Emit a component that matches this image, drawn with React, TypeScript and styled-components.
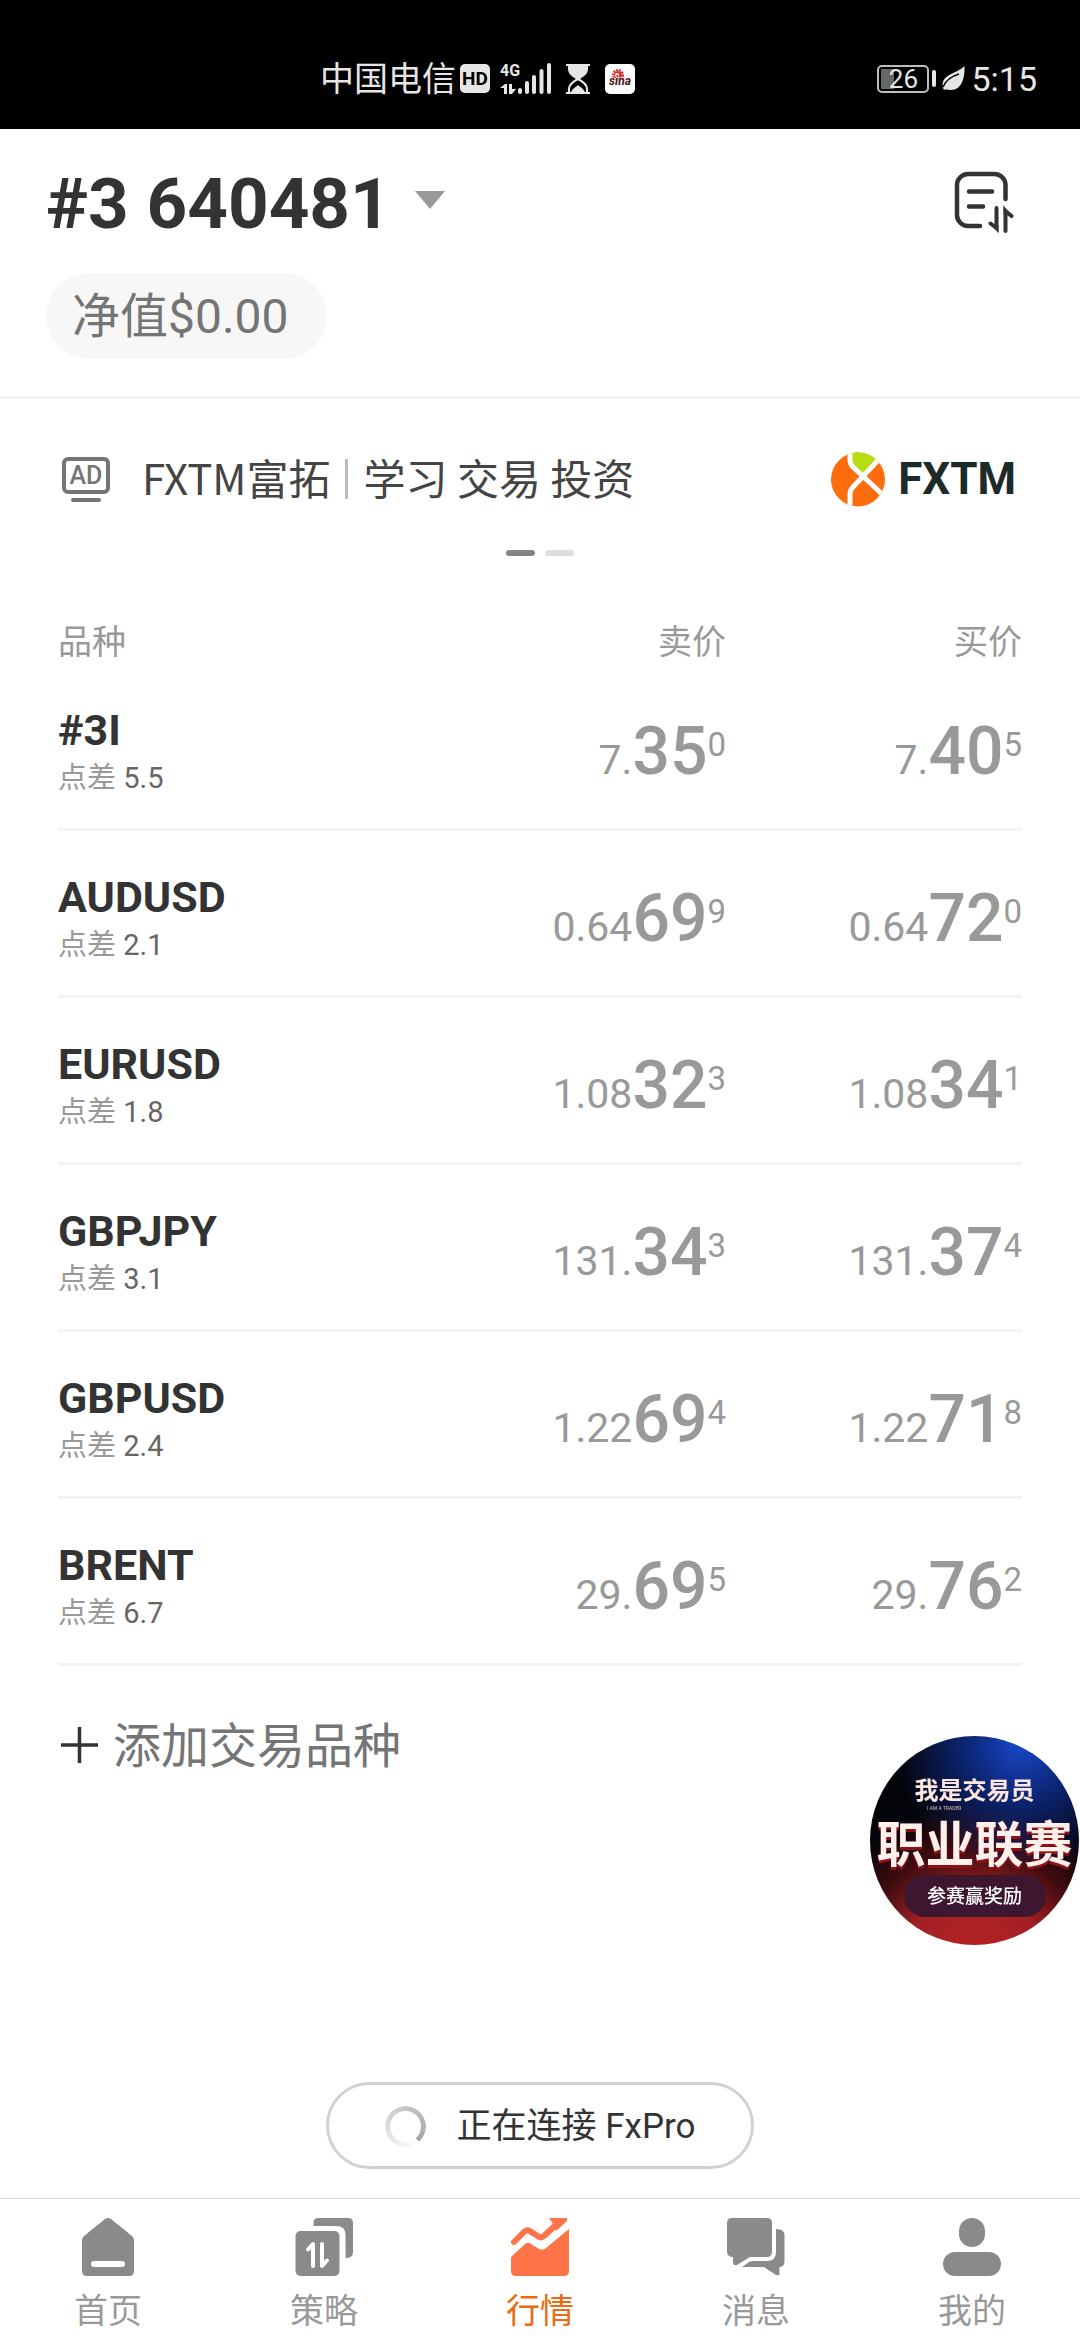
import React from "react";
import styled, { createGlobalStyle } from "styled-components";

const GlobalStyle = createGlobalStyle`
  *, *::before, *::after { box-sizing: border-box; }
  body {
    margin: 0;
    background: #fff;
    color: #333;
    font-family: Roboto, "Noto Sans CJK SC", sans-serif;
  }
  button {
    margin: 0;
    padding: 0;
    border: 0;
    background: none;
    color: inherit;
    font: inherit;
    cursor: pointer;
  }
  svg { display: block; flex: none; }
`;

const Page = styled.div`
  display: flex;
  flex-direction: column;
  min-height: 100vh;
`;

/* ---------- status bar ---------- */

const StatusBar = styled.div`
  display: flex;
  align-items: center;
  justify-content: space-between;
  height: 129px;
  padding: 28px 43px 0 320px;
  background: #000;
  color: #e6e6e6;
  line-height: 40px;
`;

const StatusGroup = styled.div<{ $gap: number }>`
  display: flex;
  align-items: center;
  gap: ${(p) => p.$gap}px;
`;

const Carrier = styled.span`
  font-size: 34px;
`;

const HdBadge = styled.span`
  width: 30px;
  height: 29px;
  border-radius: 5px;
  background: #e6e6e6;
  color: #000;
  font-size: 19px;
  font-weight: 700;
  line-height: 29px;
  text-align: center;
`;

const Signal = styled.div`
  display: flex;
  align-items: flex-end;
  height: 31px;
`;

const Network = styled.div`
  display: flex;
  flex-direction: column;
  justify-content: space-between;
  width: 18px;
  height: 31px;
  font-size: 16px;
  font-weight: 700;
  line-height: 16px;
`;

const SinaIcon = styled.span`
  width: 30px;
  height: 30px;
  border-radius: 5px;
  background: #fff;
`;

const Battery = styled.span`
  display: flex;
  align-items: center;
  gap: 3px;
  &::after {
    content: "";
    width: 4px;
    height: 17px;
    border-radius: 2px;
    background: #e6e6e6;
  }
`;

const BatteryBody = styled.span`
  width: 52px;
  height: 28px;
  border: 2px solid #bdbdbd;
  border-radius: 5px;
  background: linear-gradient(#666, #666) 2px 2px / 13px 20px no-repeat;
  font-size: 26px;
  line-height: 25px;
  text-align: center;
`;

const Clock = styled.span`
  font-size: 34px;
`;

/* ---------- account header ---------- */

const Header = styled.header`
  display: flex;
  align-items: flex-start;
  justify-content: space-between;
  padding: 33px 66px 37px 46px;
  border-bottom: 3px solid #f3f3f3;
`;

const Account = styled.div`
  display: flex;
  flex-direction: column;
  align-items: flex-start;
  gap: 27px;
`;

const AccountButton = styled.button`
  display: flex;
  align-items: center;
  gap: 24px;
  font-size: 71px;
  font-weight: 700;
  line-height: 84px;
`;

const Caret = styled.span`
  width: 0;
  height: 0;
  margin-bottom: 8px;
  border: 15px solid transparent;
  border-top: 18px solid #999;
  border-bottom: 0;
`;

const NetValue = styled.div`
  height: 86px;
  padding: 0 38px 0 26px;
  border-radius: 43px;
  background: #f7f7f7;
  color: #757575;
  font-size: 48px;
  line-height: 88px;
`;

const IconButton = styled.button`
  margin-top: 9px;
`;

/* ---------- advert ---------- */

const Advert = styled.a`
  display: flex;
  align-items: center;
  height: 120px;
  margin-top: 20px;
  padding: 0 64px 0 62px;
  color: #444;
  text-decoration: none;
`;

const AdMark = styled.span`
  display: flex;
  flex-direction: column;
  align-items: center;
  gap: 4px;
  &::after {
    content: "";
    width: 30px;
    height: 4px;
    border-radius: 2px;
    background: #757575;
  }
`;

const AdLabel = styled.span`
  width: 48px;
  height: 37px;
  border: 4px solid #757575;
  border-radius: 6px;
  color: #757575;
  font-size: 25px;
  font-weight: 500;
  line-height: 30px;
  text-align: center;
`;

const AdText = styled.span`
  display: flex;
  align-items: center;
  flex: 1;
  margin-left: 32px;
  padding-bottom: 4px;
  font-family: "Noto Sans CJK SC", sans-serif;
  font-size: 42px;
  line-height: 56px;
`;

const AdRule = styled.span`
  width: 3px;
  height: 40px;
  margin: 4px 15px 0;
  background: #bbb;
`;

const Brand = styled.span`
  display: flex;
  align-items: center;
  gap: 12px;
  color: #1d2a2a;
  font-size: 44px;
  font-weight: 700;
  line-height: 56px;
`;

const Dots = styled.div`
  display: flex;
  justify-content: center;
  gap: 10px;
  margin-top: 11px;
`;

const Dot = styled.span<{ $active?: boolean }>`
  width: 29px;
  height: 6px;
  border-radius: 3px;
  background: ${(p) => (p.$active ? "#858585" : "#dedede")};
`;

/* ---------- quotes ---------- */

const Quotes = styled.main`
  padding: 64px 58px 0;
`;

const Table = styled.table`
  width: 100%;
  border-spacing: 0;
  table-layout: fixed;
`;

const HeadCell = styled.th<{ $right?: boolean }>`
  width: ${(p) => (p.$right ? "296px" : "auto")};
  height: 44px;
  padding: 0;
  color: #999;
  font-size: 34px;
  font-weight: 400;
  line-height: 44px;
  text-align: ${(p) => (p.$right ? "right" : "left")};
`;

const Cell = styled.td<{ $right?: boolean }>`
  height: 167px;
  padding: ${(p) => (p.$right ? "52px 0 0" : "42px 0 0")};
  border-bottom: 3px solid #f3f3f3;
  vertical-align: top;
  text-align: ${(p) => (p.$right ? "right" : "left")};
`;

const SymbolName = styled.div`
  font-size: 43px;
  font-weight: 700;
  line-height: 48px;
`;

const Spread = styled.div`
  margin-top: 4px;
  color: #999;
  font-size: 29px;
  line-height: 40px;
`;

const SpreadValue = styled.span`
  color: #666;
`;

const Price = styled.div`
  color: #999;
  font-size: 41px;
  line-height: 72px;
  white-space: nowrap;
`;

const Pips = styled.span`
  font-size: 66px;
  font-weight: 500;
`;

const Fraction = styled.span`
  font-size: 33px;
  line-height: 34px;
  vertical-align: 18px;
`;

const AddButton = styled.button`
  display: flex;
  align-items: center;
  gap: 12px;
  margin-top: 45px;
  color: #757575;
  font-size: 48px;
  line-height: 72px;
`;

/* ---------- floating promotion ---------- */

const Promo = styled.button`
  position: fixed;
  right: 1px;
  bottom: 395px;
  display: flex;
  flex-direction: column;
  align-items: center;
  width: 209px;
  height: 209px;
  padding-top: 41px;
  border-radius: 50%;
  background:
    radial-gradient(circle at 72% 4%, #1747c8 0, rgba(16, 48, 150, 0.75) 22%, rgba(0, 0, 0, 0) 50%),
    radial-gradient(circle at 50% 110%, #b92225 0, #a32023 28%, rgba(90, 15, 18, 0.7) 46%, rgba(0, 0, 0, 0) 64%),
    #03040a;
  color: #fff;
  white-space: nowrap;
`;

const PromoTitle = styled.span`
  color: #fde6e0;
  font-size: 24px;
  font-weight: 700;
  line-height: 28px;
`;

const PromoCaption = styled.span`
  align-self: flex-start;
  margin-left: 57px;
  color: #e8b8b0;
  font-size: 5px;
  line-height: 6px;
`;

const PromoHeadline = styled.span`
  padding-top: 6px;
  color: #fff0ec;
  font-size: 49px;
  font-weight: 700;
  line-height: 58px;
  text-shadow: 0 3px 0 #8d1216;
`;

const PromoAction = styled.span`
  width: 142px;
  height: 42px;
  border-radius: 21px;
  background: #3d1730;
  font-size: 19px;
  font-weight: 500;
  line-height: 44px;
  text-align: center;
`;

/* ---------- footer ---------- */

const Footer = styled.footer`
  display: flex;
  flex-direction: column;
  align-items: center;
  gap: 29px;
  margin-top: auto;
`;

const Toast = styled.div`
  display: flex;
  align-items: center;
  gap: 31px;
  height: 87px;
  padding: 2px 56px 0;
  border: 3px solid #d1d1d1;
  border-radius: 44px;
  font-size: 35px;
  line-height: 48px;
`;

const Spinner = styled.span`
  width: 41px;
  height: 41px;
  border-radius: 50%;
  background: conic-gradient(from 138deg, #fff, #ddd 35%, #a5a5a5);
  mask: radial-gradient(circle, transparent 15px, #000 16px);
`;

const TabBar = styled.nav`
  display: flex;
  width: 100%;
  height: 142px;
  border-top: 1px solid #dfdfdf;
`;

const Tab = styled.button<{ $active?: boolean }>`
  display: flex;
  flex: 1;
  flex-direction: column;
  align-items: center;
  gap: 10px;
  padding-top: 19px;
  color: ${(p) => (p.$active ? "#ee6a12" : "#999")};
  font-size: 34px;
  line-height: 50px;
`;

/* ---------- drawings ---------- */

const SignalBars = () => (
  <svg width="33" height="31" viewBox="0 0 33 31" fill="none" stroke="#e6e6e6" strokeWidth="4" strokeLinecap="round">
    <path d="M2 27v2M9 20v9M16 14v15M23.500 8v21M31 2v27" />
  </svg>
);

const DataArrows = () => (
  <svg width="16" height="10" viewBox="0 0 16 10" fill="#e6e6e6">
    <path d="M0 4 5 0h2v10H4V4zM9 0h3v5h4l-4 5H9z" />
  </svg>
);

const Hourglass = () => (
  <svg width="24" height="30" viewBox="0 0 24 30" fill="#e6e6e6">
    <path d="M0 0h24v2H0zM0 28h24v2H0zM2 2h20v3c0 4-3 7-8 10-1 1-3 1-4 0C5 12 2 9 2 5z" />
    <path d="M3 28v-3c0-4 3-7 9-10 6 3 9 6 9 10v3" fill="none" stroke="#e6e6e6" strokeWidth="2" />
    <path d="M5 28c2-4 5-5 7-7 2 2 5 3 7 7z" />
  </svg>
);

const SinaLogo = () => (
  <svg width="30" height="30" viewBox="0 0 30 30">
    <circle cx="13" cy="11" r="4" fill="#d8322a" />
    <circle cx="13" cy="11" r="5" fill="none" stroke="#d8322a" strokeWidth="2" strokeDasharray="2 1" />
    <circle cx="12" cy="11" r="2" fill="#fff" />
    <text x="15" y="21" fontSize="12" fontWeight="700" fontStyle="italic" textAnchor="middle" fill="#4a1210" stroke="#fff" strokeWidth="1" paintOrder="stroke">sina</text>
  </svg>
);

const Leaf = () => (
  <svg width="23" height="25" viewBox="0 0 23 25">
    <path d="M22.500 0C23 9 21 24 9 24c-3 0-5-1-7 0L1 22C-2 8 15 8 22.500 0z" fill="#e6e6e6" />
    <path d="M1 21C4 14 10 10 17 8" fill="none" stroke="#000" strokeWidth="1.500" />
  </svg>
);

const OrdersIcon = () => (
  <svg width="60" height="64" viewBox="0 0 60 64" fill="none" stroke="#333" strokeWidth="4.500" strokeLinecap="round">
    <path d="M51.500 28V14a11 11 0 0 0-11-11H14A11 11 0 0 0 3 14v30a11 11 0 0 0 11 11h12M15 20.500h23M15 35.500h14" />
    <path d="M42.500 37v20l-6-4.500M51.500 60V40l6 5" strokeLinejoin="miter" strokeWidth="4" />
    <path d="M38 54h6.500v8.500zM49.500 34v9h6z" fill="#333" stroke="none" />
  </svg>
);

const FxtmMark = () => (
  <svg width="55" height="55" viewBox="0 0 55 55">
    <clipPath id="disc"><circle cx="27" cy="27.500" r="27" /></clipPath>
    <g clipPath="url(#disc)">
      <path d="M0 0h55v55H0z" fill="#fe6d0d" />
      <path d="M19 0v9q0 4 3 6l11 10L50 5V0z" fill="#b9dc10" />
      <path d="M19 0v8q0 4 3 7l29 27q3 3 3 8M52 3 22 35q-3 3-3 7v13" fill="none" stroke="#fff" strokeWidth="5" />
    </g>
  </svg>
);

const PlusIcon = () => (
  <svg width="43" height="40" viewBox="0 0 43 40" stroke="#333" strokeWidth="3.500">
    <path d="M3 18h37M21.500 0v36" />
  </svg>
);

const GRAY = "#898a8c";

const HomeIcon = () => (
  <svg width="60" height="58" viewBox="0 0 60 58">
    <path d="M4 22q0-2 2-4L27 1q3-2 6 0l21 17q2 2 2 4v31q0 5-5 5H9q-5 0-5-5z" fill={GRAY} />
    <rect x="13" y="43" width="34" height="6" rx="3" fill="#fff" />
  </svg>
);

const StrategyIcon = () => (
  <svg width="60" height="58" viewBox="0 0 60 58" fill={GRAY}>
    <rect x="1.500" y="13" width="44" height="45" rx="5" />
    <path d="M19.500 8V5q0-5 5-5H54q5 0 5 5v29q0 6-7.500 6V17q0-9-9-9z" />
    <path d="M19 48V26l-5 5.500M28 26v22l5-5.500" fill="none" stroke="#fff" strokeWidth="4" strokeLinecap="round" strokeLinejoin="round" />
  </svg>
);

const MarketIcon = () => (
  <svg width="60" height="58" viewBox="0 0 60 58" fill="#ff7349">
    <path d="m2 38 13-12q3-2.500 6 0l8 5q4 2 7-1l23-19v42q0 5-5 5H6q-5 0-5-5V41q0-2 1-3z" />
    <path d="m4 24 10.500-10.500q3-2.500 6 0l8 5q3 2 6-1L49 4" fill="none" stroke="#ff7349" strokeWidth="6" strokeLinecap="round" />
    <path d="M39 0h18v3L46 13l-3-7z" />
  </svg>
);

const MessageIcon = () => (
  <svg width="60" height="58" viewBox="0 0 60 58" fill={GRAY}>
    <path d="M6 0h35q5 0 5 5v28q0 6-5 6H24L11 47q-4 1-4-3v-5q-6 0-6-6V5q0-5 5-5z" />
    <path d="M50 11q8.500 0 8.500 6v26q0 6-5 6v7q0 2-3.500 1l-12-8H16l7-5q2-1 4-1h14q9 0 9-9z" />
  </svg>
);

const ProfileIcon = () => (
  <svg width="60" height="58" viewBox="0 0 60 58" fill={GRAY}>
    <rect x="17" y="0" width="26" height="29" rx="13" />
    <rect x="1" y="34" width="58" height="24" rx="12" />
  </svg>
);

/* ---------- data ---------- */

type Quote = { name: string; spread: string; sell: string[]; buy: string[] };

const quotes: Quote[] = [
  { name: "#3I", spread: "5.5", sell: ["7.", "35", "0"], buy: ["7.", "40", "5"] },
  { name: "AUDUSD", spread: "2.1", sell: ["0.64", "69", "9"], buy: ["0.64", "72", "0"] },
  { name: "EURUSD", spread: "1.8", sell: ["1.08", "32", "3"], buy: ["1.08", "34", "1"] },
  { name: "GBPJPY", spread: "3.1", sell: ["131.", "34", "3"], buy: ["131.", "37", "4"] },
  { name: "GBPUSD", spread: "2.4", sell: ["1.22", "69", "4"], buy: ["1.22", "71", "8"] },
  { name: "BRENT", spread: "6.7", sell: ["29.", "69", "5"], buy: ["29.", "76", "2"] },
];

const tabs = [
  { label: "首页", Icon: HomeIcon },
  { label: "策略", Icon: StrategyIcon },
  { label: "行情", Icon: MarketIcon, active: true },
  { label: "消息", Icon: MessageIcon },
  { label: "我的", Icon: ProfileIcon },
];

const PriceValue = ({ parts }: { parts: string[] }) => (
  <Price>
    {parts[0]}
    <Pips>{parts[1]}</Pips>
    <Fraction>{parts[2]}</Fraction>
  </Price>
);

export default function App() {
  return (
    <Page>
      <GlobalStyle />
      <StatusBar>
        <StatusGroup $gap={10}>
          <StatusGroup $gap={4}>
            <Carrier>中国电信</Carrier>
            <HdBadge>HD</HdBadge>
          </StatusGroup>
          <StatusGroup $gap={15}>
            <Signal>
              <Network>
                4G
                <DataArrows />
              </Network>
              <SignalBars />
            </Signal>
            <Hourglass />
            <SinaIcon><SinaLogo /></SinaIcon>
          </StatusGroup>
        </StatusGroup>
        <StatusGroup $gap={6}>
          <Battery><BatteryBody>26</BatteryBody></Battery>
          <Leaf />
          <Clock>5:15</Clock>
        </StatusGroup>
      </StatusBar>

      <Header>
        <Account>
          <AccountButton>
            #3 640481
            <Caret />
          </AccountButton>
          <NetValue>净值$0.00</NetValue>
        </Account>
        <IconButton aria-label="orders"><OrdersIcon /></IconButton>
      </Header>

      <Advert href="#fxtm">
        <AdMark><AdLabel>AD</AdLabel></AdMark>
        <AdText>
          FXTM富拓
          <AdRule />
          学习 交易 投资
        </AdText>
        <Brand><FxtmMark />FXTM</Brand>
      </Advert>
      <Dots>
        <Dot $active />
        <Dot />
      </Dots>

      <Quotes>
        <Table>
          <thead>
            <tr>
              <HeadCell>品种</HeadCell>
              <HeadCell $right>卖价</HeadCell>
              <HeadCell $right>买价</HeadCell>
            </tr>
          </thead>
          <tbody>
            {quotes.map((q) => (
              <tr key={q.name}>
                <Cell>
                  <SymbolName>{q.name}</SymbolName>
                  <Spread>点差 <SpreadValue>{q.spread}</SpreadValue></Spread>
                </Cell>
                <Cell $right><PriceValue parts={q.sell} /></Cell>
                <Cell $right><PriceValue parts={q.buy} /></Cell>
              </tr>
            ))}
          </tbody>
        </Table>
        <AddButton><PlusIcon />添加交易品种</AddButton>
      </Quotes>

      <Promo>
        <PromoTitle>我是交易员</PromoTitle>
        <PromoCaption>I AM A TRADER</PromoCaption>
        <PromoHeadline>职业联赛</PromoHeadline>
        <PromoAction>参赛赢奖励</PromoAction>
      </Promo>

      <Footer>
        <Toast role="status"><Spinner />正在连接 FxPro</Toast>
        <TabBar>
          {tabs.map(({ label, Icon, active }) => (
            <Tab key={label} $active={active}>
              <Icon />
              {label}
            </Tab>
          ))}
        </TabBar>
      </Footer>
    </Page>
  );
}
